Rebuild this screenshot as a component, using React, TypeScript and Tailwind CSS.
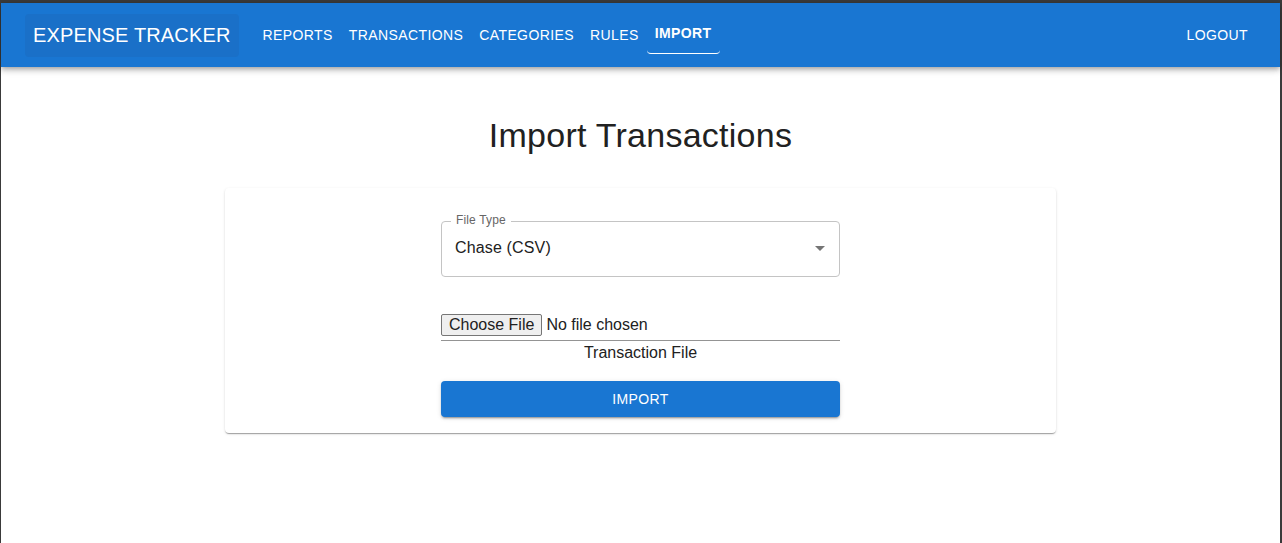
import React from "react";

const navItems = ["REPORTS", "TRANSACTIONS", "CATEGORIES", "RULES"];

export default function App() {
  return (
    <div
      className="w-[1282px] h-[543px] bg-[#3a3a3a] pt-[3px] pl-[1px] pr-[2px] overflow-hidden"
      style={{ fontFamily: '"Liberation Sans", Arial, sans-serif' }}
    >
      <div className="h-full bg-white flex flex-col">
        <header className="h-16 shrink-0 bg-[#1976d2] text-white flex items-center px-6 shadow-[0_2px_4px_-1px_rgba(0,0,0,0.2),0_4px_5px_0_rgba(0,0,0,0.14),0_1px_10px_0_rgba(0,0,0,0.12)] relative z-10">
          <div className="h-[43px] flex items-center px-2 bg-[#1a70c8] rounded-[4px] text-[20px] tracking-[0.15px] mr-[16px]">
            EXPENSE TRACKER
          </div>
          <nav className="flex items-center">
            {navItems.map((n) => (
              <button
                key={n}
                className="px-2 h-9 text-[14px] font-medium tracking-[0.4px] text-white"
              >
                {n}
              </button>
            ))}
            <button className="px-2 h-9 text-[14px] font-bold tracking-[0.4px] text-white border-b border-white rounded-[4px] mt-[2px] pb-[4px]">
              IMPORT
            </button>
          </nav>
          <div className="flex-1" />
          <button className="px-2 h-9 text-[14px] tracking-[0.4px] text-white">
            LOGOUT
          </button>
        </header>

        <main className="flex flex-col items-center">
          <h1 className="mt-[47px] text-[34px] leading-[42px] tracking-[0.25px] text-[#212121]">
            Import Transactions
          </h1>
          <div className="mt-8 w-[831px] h-[245px] rounded-[4px] bg-white shadow-[0_2px_1px_-1px_rgba(0,0,0,0.2),0_1px_1px_0_rgba(0,0,0,0.14),0_1px_3px_0_rgba(0,0,0,0.12)] flex flex-col items-center pt-[33px]">
            <div className="w-[399px] flex flex-col">
              <div className="relative h-[56px] rounded-[4px] border border-[#c4c4c4] flex items-center px-[13px] pb-[2px]">
                <span className="absolute -top-[9px] left-[9px] bg-white px-[5px] text-[12px] leading-[14px] text-[#666666] tracking-[0.15px]">
                  File Type
                </span>
                <span className="text-[16px] text-[#212121] tracking-[0.15px]">Chase (CSV)</span>
                <div className="flex-1" />
                <svg viewBox="0 0 24 24" className="w-6 h-6 mr-[-6px]" fill="#757575">
                  <path d="M7 10l5 5 5-5z" />
                </svg>
              </div>

              <div className="mt-[37px] border-b border-[#949494] h-[27px] flex items-start">
                <input
                  type="file"
                  className="text-[16px] leading-[20px] text-[#212121] file:h-[22px] file:bg-[#efefef] file:border file:border-solid file:border-[#767676] file:rounded-[2px] file:px-[7px] file:mr-[4px] file:text-[16px] file:text-[#212121]"
                  style={{ fontFamily: '"Liberation Sans", Arial, sans-serif' }}
                />
              </div>
              <div className="text-center text-[16px] leading-[20px] mt-[2px] text-[#212121]">
                Transaction File
              </div>

              <button className="mt-[18px] h-9 w-full rounded-[4px] bg-[#1976d2] text-white text-[14px] tracking-[0.4px] shadow-[0_3px_1px_-2px_rgba(0,0,0,0.2),0_2px_2px_0_rgba(0,0,0,0.14),0_1px_5px_0_rgba(0,0,0,0.12)]">
                IMPORT
              </button>
            </div>
          </div>
        </main>
      </div>
    </div>
  );
}
